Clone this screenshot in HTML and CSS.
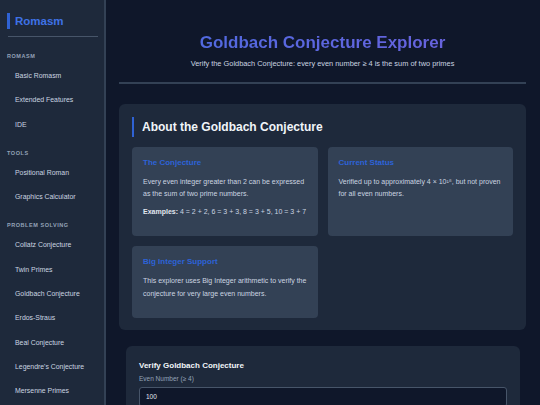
FILE: index.html
```html
<!DOCTYPE html>
<html lang="en">
<head>
<meta charset="utf-8">
<title>Goldbach Conjecture Explorer</title>
<link rel="stylesheet" href="styles.css">
</head>
<body>
<div class="app">
  <aside class="sidebar">
    <div class="brand">Romasm</div>
    <div class="divider"></div>
    <div class="group first">
      <div class="group-label">ROMASM</div>
      <a class="nav-item">Basic Romasm</a>
      <a class="nav-item">Extended Features</a>
      <a class="nav-item">IDE</a>
    </div>
    <div class="group">
      <div class="group-label">TOOLS</div>
      <a class="nav-item">Positional Roman</a>
      <a class="nav-item">Graphics Calculator</a>
    </div>
    <div class="group">
      <div class="group-label">PROBLEM SOLVING</div>
      <a class="nav-item">Collatz Conjecture</a>
      <a class="nav-item">Twin Primes</a>
      <a class="nav-item">Goldbach Conjecture</a>
      <a class="nav-item">Erdos-Straus</a>
      <a class="nav-item">Beal Conjecture</a>
      <a class="nav-item">Legendre's Conjecture</a>
      <a class="nav-item">Mersenne Primes</a>
    </div>
  </aside>
  <main class="main">
    <header class="header">
      <h1 class="title">Goldbach Conjecture Explorer</h1>
      <p class="subtitle">Verify the Goldbach Conjecture: every even number ≥ 4 is the sum of two primes</p>
    </header>
    <section class="info">
      <h2 class="info-heading">About the Goldbach Conjecture</h2>
      <div class="info-grid">
        <div class="info-card">
          <h3 class="card-title">The Conjecture</h3>
          <p class="card-text">Every even integer greater than 2 can be expressed as the sum of two prime numbers.</p>
          <p class="card-text"><strong>Examples:</strong> 4 = 2 + 2, 6 = 3 + 3, 8 = 3 + 5, 10 = 3 + 7</p>
        </div>
        <div class="info-card">
          <h3 class="card-title">Current Status</h3>
          <p class="card-text">Verified up to approximately 4 × 10¹⁸, but not proven for all even numbers.</p>
        </div>
        <div class="info-card">
          <h3 class="card-title">Big Integer Support</h3>
          <p class="card-text">This explorer uses Big Integer arithmetic to verify the conjecture for very large even numbers.</p>
        </div>
      </div>
    </section>
    <section class="verify">
      <h3 class="verify-title">Verify Goldbach Conjecture</h3>
      <label class="field-label">Even Number (≥ 4)</label>
      <div class="input">100</div>
    </section>
  </main>
</div>
</body>
</html>
```

FILE: styles.css
```css
* { box-sizing: border-box; }
html, body {
  margin: 0;
  padding: 0;
  height: 100%;
  overflow: hidden;
  background: #0f172a;
  font-family: "Liberation Sans", Arial, sans-serif;
  color: #e2e8f0;
}
.app {
  display: flex;
  height: 405px;
  overflow: hidden;
}
.sidebar {
  width: 106px;
  flex: none;
  background: #1e293b;
  border-right: 2px solid #334155;
  padding: 13px 6px 0 7px;
  overflow: hidden;
}
.brand {
  border-left: 3px solid #2f62d4;
  padding-left: 5px;
  height: 16px;
  line-height: 16px;
  font-size: 11.5px;
  font-weight: bold;
  color: #3f72e6;
}
.divider {
  height: 1px;
  background: #475569;
  margin: 7px 0 0 1px;
}
.group {
  display: flex;
  flex-direction: column;
  margin-top: 12px;
}
.group.first { margin-top: 15px; }
.group-label {
  font-size: 5.5px;
  font-weight: bold;
  letter-spacing: 0.55px;
  color: #94a3b8;
  line-height: 8px;
  margin-bottom: 4px;
}
.nav-item {
  display: block;
  font-size: 6.9px;
  line-height: 24.3px;
  padding-left: 8px;
  color: #cbd5e1;
}
.main {
  flex: 1;
  padding: 32px 14px 0 13px;
  min-width: 0;
  overflow: hidden;
}
.header {
  text-align: center;
  border-bottom: 2px solid #334155;
  padding-bottom: 13px;
  margin-bottom: 20px;
}
.title {
  margin: 0;
  font-size: 17px;
  line-height: 21px;
  font-weight: bold;
  background: linear-gradient(90deg, #4a6be0, #6e61dd);
  -webkit-background-clip: text;
  background-clip: text;
  color: transparent;
}
.subtitle {
  margin: 6px 0 0;
  font-size: 7.4px;
  line-height: 9.5px;
  color: #cbd5e1;
}
.info {
  background: #1e293b;
  border-radius: 6px;
  padding: 13px 13px 12px 13px;
}
.info-heading {
  margin: 0 0 10px;
  border-left: 2px solid #2f62d4;
  padding-left: 8px;
  height: 20px;
  line-height: 20px;
  font-size: 12px;
  font-weight: bold;
  color: #f1f5f9;
}
.info-grid {
  display: grid;
  grid-template-columns: 1fr 1fr;
  gap: 10px;
}
.info-card {
  background: #334155;
  border-radius: 4px;
  padding: 11px 11px 18px;
}
.card-title {
  margin: 0 0 8px;
  font-size: 8px;
  line-height: 10px;
  font-weight: bold;
  color: #2d63d8;
}
.card-text {
  margin: 0 0 5px;
  font-size: 7px;
  line-height: 12.5px;
  color: #cbd5e1;
}
.card-text:last-child { margin-bottom: 0; }
.card-text strong { color: #e2e8f0; }
.verify {
  background: #1e293b;
  border-radius: 6px;
  margin: 16px 6px 0 7px;
  padding: 15px 13px 20px;
}
.verify-title {
  margin: 0;
  font-size: 8px;
  line-height: 10px;
  font-weight: bold;
  color: #f1f5f9;
}
.field-label {
  display: block;
  margin-top: 3px;
  font-size: 6.5px;
  line-height: 9px;
  color: #94a3b8;
}
.input {
  margin-top: 4px;
  height: 20px;
  background: #0f172a;
  border: 1px solid #475569;
  border-radius: 3px;
  padding: 0 6px;
  line-height: 18px;
  font-size: 6.5px;
  color: #e2e8f0;
}
```
